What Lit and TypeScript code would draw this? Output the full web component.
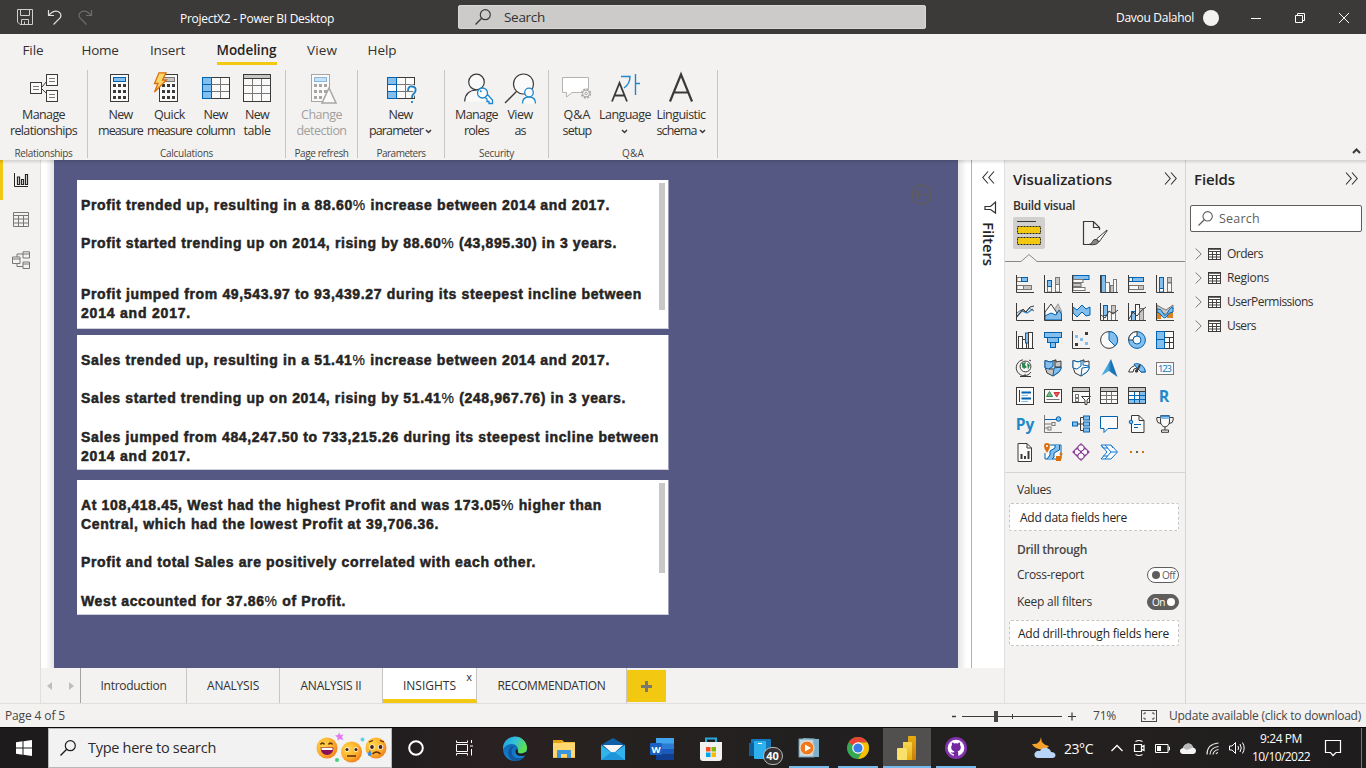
import { LitElement, html, css, svg, nothing } from "lit";
import { customElement, property } from "lit/decorators.js";

/** A single line of text whose tracking is adjusted so it spans `w` pixels. */
@customElement("fit-text")
class FitText extends LitElement {
  @property({ type: Number }) w = 0;
  @property() text = "";
  static styles = css`
    :host { display: inline-block; white-space: pre; }
    .thin { font-weight: 400; -webkit-text-stroke: 0.25px currentColor; }
  `;
  render() {
    const parts = this.text.split("%");
    const thin = this.hasAttribute("thin-percent");
    return html`<span>${thin ? parts.map((p, i) => html`${p}${i < parts.length - 1 ? html`<span class="thin">%</span>` : nothing}`) : this.text}</span>`;
  }
  updated() {
    const s = this.renderRoot.querySelector("span") as HTMLElement;
    s.style.letterSpacing = "0px";
    const natural = s.getBoundingClientRect().width;
    s.style.letterSpacing = (this.w - natural) / Math.max(1, this.text.length) + "px";
  }
}

const t = (text: string, w: number) => html`<fit-text .text=${text} .w=${w}></fit-text>`;

const D = "#3b3a39", G = "#c8c6c4", GS = "#797775", B = "#83beec", BS = "#0063b1", W = "#fafafa";

const rc = (x: number, y: number, w: number, h: number, f = "none", s = "none") =>
  svg`<rect x=${x} y=${y} width=${w} height=${h} fill=${f} stroke=${s}/>`;
const ph = (d: string, s = D, f = "none", sw = 1) =>
  svg`<path d=${d} stroke=${s} fill=${f} stroke-width=${sw}/>`;
const ci = (x: number, y: number, r: number, f = "none", s = "none", sw = 1) =>
  svg`<circle cx=${x} cy=${y} r=${r} fill=${f} stroke=${s} stroke-width=${sw}/>`;
const ic = (w: number, h: number, body: unknown) =>
  html`<svg width=${w} height=${h} viewBox="0 0 ${w} ${h}" fill="none">${body}</svg>`;

const axis = ph("M.5 0V17.5H18");
const map = "M1 1.5L6 3L12 .8L12 3L17 2V9L15 13L9 17L3 14L1 8Z";

const visuals = [
  [rc(1, 2.5, 5, 4, W, GS), rc(5.5, 2.5, 6, 4, B, BS), rc(1, 10.5, 7, 4, W, GS), rc(7.5, 10.5, 8, 4, G, GS), axis],
  [rc(3.5, 11, 4, 6, W, GS), rc(3.5, 5.5, 4, 6, B, BS), rc(11.5, 9, 4, 8, W, GS), rc(11.5, 2.5, 4, 7, G, GS), axis],
  [rc(1, .5, 16, 4, B, BS), rc(1, 4.5, 10, 3, W, GS), rc(1, 8.5, 8, 3, G, GS), rc(1, 12.5, 12, 3, W, GS), axis],
  [rc(1.5, .5, 4, 17, B, BS), rc(5.5, 7.5, 4, 10, W, GS), rc(10.5, 10.5, 3, 7, G, GS), rc(13.5, 4.5, 3, 13, W, GS), axis],
  [rc(1, 2.5, 4, 4, W, BS), rc(4.5, 2.5, 11, 4, B, BS), rc(1, 10.5, 10, 4, W, GS), rc(10.5, 10.5, 5, 4, G, GS), axis],
  [rc(3.5, 12, 4, 5, W, BS), rc(3.5, 2.5, 4, 11, B, BS), rc(11.5, 8, 4, 9, W, GS), rc(11.5, 2.5, 4, 5, G, GS), axis],

  [ph("M1 13L6 8L11 10L17 6", "#2488d8", "none", 1.3), ph("M1 10L5 7L10 9L13 5L18 8", "#605e5c"), ph("M1 14L7 6L10 9L14 4L18 3"), axis],
  [ph("M9 9L14 .8L17.5 8V17H9Z", "#a19f9d", G), ph("M1 17V9L7 1L13 10V17Z", D, W), ph("M1 13L7 10L12 12L15 7L17.5 11V17H1Z", BS, B), axis],
  [ph("M1 4L5 7L10 2L14 6L18 4V12L14 13L10 9L5 14L1 10Z", BS, B), axis],
  [rc(3.5, 2.5, 4, 15, B, BS), rc(11.5, 2.5, 4, 15, G, GS), rc(3.5, 12.5, 4, 5, W, BS), rc(11.5, 9.5, 4, 8, W, GS), ph("M1 12L5 15L9 8L13 11L18 7"), axis],
  [rc(3.5, 8.5, 4, 9, B, BS), rc(7.5, 1.5, 4, 16, W, D), rc(11.5, 5.5, 4, 12, G, GS), ph("M1 16L5 9L9 13L13 8L18 4"), axis],
  [ph("M1 2L6 5L10 7L17 2V6L12 12L6 10L1 8Z", GS, G), rc(1, 8, 4, 8, "#d98324"), rc(11, 9, 6, 6, "#d98324"), ph("M1 6Q5 5 7 10T12 9T17 5V9Q13 9 11 13T5 12T1 10Z", BS, B), axis],

  [rc(2.5, 5.5, 4, 12, W, D), rc(6.5, 8.5, 4, 9, W, D), rc(9.5, 2, 3, 10, B, BS), rc(12.5, 1.5, 4, 16, W, D), axis],
  [rc(.5, 1.5, 17, 5, B, BS), rc(3.5, 6.5, 11, 5, B, BS), rc(6.5, 11.5, 5, 5, B, BS)],
  [rc(13, 1, 3, 3, D), rc(3, 4, 3, 3, B), rc(8, 7, 3, 3, B), rc(13, 11, 3, 3, B), rc(3, 12, 3, 3, D), axis],
  [ci(9, 9, 8.4, W, D), ph("M9 9V.6A8.4 8.4 0 0 1 15 15Z", BS, B)],
  [ci(9, 9, 8.4, B, BS), ph("M9 .6A8.4 8.4 0 0 0 .6 9H5A4 4 0 0 1 9 5Z", D, W), ci(9, 9, 4, W, BS)],
  [rc(.5, .5, 17, 17, W, D), rc(.5, .5, 8, 8, B, BS), rc(.5, 8.5, 8, 9, B, BS), ph("M8.5 6.5H17.5M13.5 6.5V17.5M8.5 11.5H17.5")],

  [ci(9.5, 7.5, 5.4, W, D), ph("M6 4L10 3L9 6L11 8L8 10L6 8ZM11 4L14 6L12 11Z", "none", "#2d8a4e"), ph("M7 .8A8 8 0 1 0 15 13M9 15V17.5M4 17.5H15M13 1L15 2", D)],
  [ph(map, D, G), ph("M1 1.5L6 3L9 2V7L5 10L1 9ZM10 9L17 8V10L15 13L9 17Z", BS, B), ph("M11 1V8H17M5 10L9 10", D)],
  [ph(map, D, W), ph("M1 1.5L6 3L9 2V7L5 10L1 9ZM10 9L17 8V10L15 13L9 17Z", BS, W), ph("M11 1V6L17 7", BS)],
  [svg`<defs><linearGradient id="az" x1="0" x2="1"><stop offset=".4" stop-color="#4aa9dc"/><stop offset=".6" stop-color="#1b74b8"/></linearGradient></defs><path d="M11 0L17.500 18L9 12L1.500 16.500Z" fill="url(#az)"/>`],
  [ph("M.7 13A8.500 8.500 0 0 1 17.300 13H13A4 4 0 0 0 5 13Z", D, W), ph("M6 5.200A8.500 8.500 0 0 1 17.300 13H13L9 9Z", BS, B), ph("M8 13L12 6", D, "none", 2), ci(8.5, 12, 1.6, D)],
  [rc(.5, 3.5, 17, 12, W, GS), svg`<text x="9" y="13" text-anchor="middle" font-size="9.500" font-family="Noto Sans, sans-serif" fill="#0f7ac6" textLength="14">123</text>`],

  [rc(.5, .5, 17, 17, W, D), ph("M3.500 3V15", D), ph("M5.500 5.500H15M5.500 11.500H15", BS, "none", 2), ph("M5.500 8.500H12M5.500 14.500H12", B)],
  [rc(.5, 2.5, 17, 13, W, D), ph("M2.500 9.500L5.500 4.500L8.500 9.500Z", "#2d8a4e", "#7bbf8e"), ph("M10 5.500H15.500L12.700 10Z", "#d13438", "#e05a5e"), ph("M2.500 12.500H15.500", GS)],
  [rc(.5, .5, 17, 15, W, D), rc(1, 1, 16, 3, G), ph("M.5 4.500H17.500", D), rc(3.5, 7.5, 3, 3, "none", GS), rc(3.5, 11.5, 3, 3, "none", GS), ph("M9.500 9.500H18.500L15 13V17.500H13V13Z", D, "#fff")],
  [rc(.5, .5, 17, 16, W, D), rc(1, 1, 16, 3, G), ph("M.5 4.500H17.500", D), ph("M6.500 5V16.500M11.500 5V16.500M1 8.500H17M1 12.500H17", GS)],
  [rc(.5, .5, 17, 16, W, D), rc(1, 1, 16, 3, G), rc(1, 12.5, 16, 4, B), rc(11.5, 5, 6, 12, B), ph("M.5 4.500H17.500", D), ph("M6.500 5V16.500M11.500 5V16.500M1 8.500H17M1 12.500H17", BS), rc(.5, .5, 17, 16, "none", D)],
  [svg`<text x="8" y="15" text-anchor="middle" font-size="16" font-weight="700" font-family="Open Sans, sans-serif" fill="#1f8ac9">R</text>`],

  [svg`<text x="9" y="14.500" text-anchor="middle" font-size="15.500" font-weight="700" font-family="Open Sans, sans-serif" fill="#1f8ac9">Py</text>`],
  [ph("M.5 0V17.500H18", GS), ph("M1 4.500H13", BS), ph("M1 9H8M1 13H5", GS), ci(14.5, 4, 2.3, B, BS), rc(8, 7.5, 3, 3, W, GS), rc(4, 12, 3, 3, W, GS)],
  [ph("M6 9H11M8.500 9V2.500H11M8.500 9V15.500H11", D), rc(.5, 7, 5, 4, B, BS), rc(11.5, 1, 6, 4, B, BS), rc(11.5, 7, 6, 4, B, BS), rc(11.5, 13, 6, 4, B, BS)],
  [ph("M.5 1.500H17.500V13.500H8L4 17.500V13.500H.5Z", BS, W)],
  [ph("M3.500 .5H11L16 5.500V17.500H3.500Z", D, W), ph("M11 .5V5.500H16"), ci(3, 7, 1.8, B, BS), ph("M6 9.500H13M6 12.500H10", BS)],
  [ph("M4.500 .8H13.500V6Q13.500 11 9 12Q4.500 11 4.500 6Z", D, W), rc(4.5, 1, 9, 3, B), ph("M4.500 1H13.500", BS), ph("M4.500 2.500H.8V5Q1 8.500 5 8.500M13.500 2.500H17.200V5Q17 8.500 13 8.500M9 12V15M5.500 17.300V15H12.500V17.300Z")],

  [ph("M2 .5H11L15.500 5V18.500H2Z", D, W), ph("M11 .5V5H15.500"), ph("M5.500 16V11M9 16V13M12.500 16V8", D, "none", 2)],
  [ph("M6 2H17V16H1V10", BS, W), ph("M13 2V6L8 9V13L5 16", "#83beec", "none", 4), ph("M11 2V5L6 8V12L3 16M15.500 2V7L10 10V14L8 16", BS), ph("M3 0A3 3 0 0 1 6 3Q6 6 3 10Q0 6 0 3A3 3 0 0 1 3 0Z", "none", "#d9700b"), ci(3, 3, 1, "#fff"), rc(12, 13, 5, 5, "#d9700b"), ci(17, 11, 1.5, "#d9700b")],
  [ph("M9 .8L17 9L9 17.200L1 9Z", "#8a3a96", W, 1.2), ci(5.5, 9, 3.2, W, "#8a3a96"), ci(12.5, 9, 3.2, W, "#8a3a96"), ci(9, 5, 3.2, W, "#8a3a96"), ci(9, 13, 3.2, W, "#8a3a96"), ph("M5 5L13 13M13 5L5 13", "#8a3a96")],
  [ph("M1 2H11L17.500 9L11 16H1L7 9Z", "#1279d2", W), ph("M5 2L11 9L5 16M1 2L3 5H8M3 13H8M11 2L13 5M11 9H17", "#1279d2")],
  [rc(2, 8, 2, 2, "#d9700b"), rc(8, 8, 2, 2, "#605e5c"), rc(14, 8, 2, 2, "#d9700b")],
];

/* Ribbon glyphs, 32 x 32 */
const calc = (x: number, dk = D, fill = B, st = BS) => [
  rc(x + .5, 2.5, 18, 27, W, dk), rc(x + 3.5, 5.5, 12, 4, fill, st),
  [12, 18, 24].map(y => [3, 8, 13].map(dx => rc(x + dx, y, 3, 3, dk))),
];
const node = (x: number, y: number) => [rc(x + .5, y + .5, 11, 11, W, D), ph(`M${x + 3} ${y + 4.5}H${x + 9}M${x + 3} ${y + 7.5}H${x + 9}`, GS)];
const table = (blueCol: boolean) => [
  rc(2.5, 5.5, 27, 21, W, D), rc(2.5, 5.5, 9, 21, B, BS), ph("M11.500 12.500H29M11.500 19.500H29M20.500 6V26", GS), ph("M3 12.500H11M3 19.500H11", BS),
  blueCol ? nothing : [rc(3, 13, 8, 6, W), rc(2.5, 5.5, 9, 21, "none", BS)],
];
const R: Record<string, unknown> = {
  rel: [ph("M14 15L19 9M14 17L19 22"), node(2, 10), node(18, 2), node(18, 18)],
  calc: calc(5),
  quick: [calc(5, D, G, GS), ph("M5 .8H12L8.500 8H12.500L.5 20L4 11.500H.5Z", "#d8710d", "#fcd56a", 1.3)],
  column: table(true),
  table: [rc(2.5, 2.5, 27, 27, W, D), rc(3, 3, 26, 3.5, G), ph("M2.500 6.500H29.500", D), ph("M3 13.500H29M3 21.500H29M11.500 7V29M20.500 7V29", GS)],
  change: [calc(5, "#a8a6a4", "#c7e0f4", "#8ab8dc"), ph("M23 16L30 31H16Z", "#a8a6a4", W, 1.5)],
  param: [table(false), ph("M23 19Q23 14 27 14.500Q31.500 15 30.500 19Q30 21 28 22.500Q27 23.500 27 26M27 29V31", "#f3f2f1", "none", 4), ph("M23 19Q23 14 27 14.500Q31.500 15 30.500 19Q30 21 28 22.500Q27 23.500 27 26M27 29V31", "#1f7fc0", "none", 1.8)],
  roles: [ph("M4 29.500Q4 18 15.500 18Q20 18 22 20L24 29.500Z", "none", W), ci(15.500, 10, 7.8, W, D, 1.2), ph("M3.700 29.500Q4 18.500 15.500 18", D, "none", 1.2), ph("M26 22L31.500 28V31.500H28V29.500H26V27L23.500 25Z", "#1e88cf", W, 1.3), ci(21.5, 21, 5, W, "#1e88cf", 1.3), ci(19.8, 19.3, 1, "#1e88cf")],
  view: [ci(19.5, 12, 10, W, D, 1.2), ph("M12.500 19.500L1 31", D, "none", 1.3), ph("M18.500 31.500Q18.500 24.500 25 24.500T31.500 31.500", "#f3f2f1", W, 4), ph("M18.500 31.500Q18.500 25 25 25T31.500 31.500", "#1e88cf", W, 1.3), ci(25, 20.5, 4.3, W, "#1e88cf", 1.3)],
  qa: [ph("M1.500 5.500H27.500V20.500H11L5.500 25V20.500H1.500Z", "#b5b3b1", "#fff"), ci(25, 21.500, 5.500, "#f3f2f1"), svg`<circle cx="25" cy="21.500" r="4.200" fill="#fafafa" stroke="#a8a6a4" stroke-width="2" stroke-dasharray="2 1.300"/>`, ci(25, 21.5, 3.4, "#fafafa", "#a8a6a4"), ci(25, 21.5, 1.3, "none", "#a8a6a4")],
  lang: [ph("M3 29.500L10.500 11L18 29.500M5.500 23.500H15.500", D, "none", 1.8), ph("M12 4.500H21Q21 12 15 16M26.500 2V23M26.500 11.500H31", "#1e88cf", "none", 1.4)],
  ling: [ph("M5 29.500L16 2.500L27 29.500M9 20.500H23", D, "none", 2.2)],
};

type Btn = [string, number, string, number, string, number, boolean?];
const groups: { label: string; lw: number; w: number; pad: number; dim?: boolean; buttons: Btn[] }[] = [
  { label: "Relationships", lw: 58, w: 88, pad: 0, buttons: [["rel", 87, "Manage", 43, "relationships", 67]] },
  { label: "Calculations", lw: 53, w: 198, pad: 8, buttons: [["calc", 49, "New", 24, "measure", 45], ["quick", 49, "Quick", 31, "measure", 45], ["column", 43, "New", 24, "column", 39], ["table", 40, "New", 24, "table", 27]] },
  { label: "Page refresh", lw: 54, w: 72, pad: 0, dim: true, buttons: [["change", 71, "Change", 41, "detection", 50]] },
  { label: "Parameters", lw: 49, w: 87, pad: 0, buttons: [["param", 85, "New", 24, "parameter", 54, true]] },
  { label: "Security", lw: 35, w: 104, pad: 9, buttons: [["roles", 45, "Manage", 43, "roles", 25], ["view", 42, "View", 25, "as", 11]] },
  { label: "Q&A", lw: 22, w: 169, pad: 8, buttons: [["qa", 40, "Q&A", 27, "setup", 29], ["lang", 56, "Language", 52, "", 0, true], ["ling", 56, "Linguistic", 49, "schema", 40, true]] },
];

const caret = html`<span class="caret">${ic(7, 5, ph("M1 1L3.500 3.500L6 1", D, "none", 1.5))}</span>`;
const lens = (s: number, c: string) => html`<svg width=${s} height=${s} viewBox="0 0 16 16" fill="none"><circle cx="10.300" cy="5.700" r="5" stroke=${c} stroke-width="1.200"/><path d="M6.700 9.300L.5 15.500" stroke=${c} stroke-width="1.300"/></svg>`;
const dbl = (flip: boolean) => ic(13, 13, ph(flip ? "M6 .5L.8 6.500L6 12.500M12 .5L6.800 6.500L12 12.500" : "M1 .5L6.200 6.500L1 12.500M7 .5L12.200 6.500L7 12.500", "#323130", "none", 1.1));

const insights: { cls: string; thumb: string; lines: [string, number][] }[] = [
  { cls: "card c1", thumb: "thumb t1", lines: [
    ["Profit trended up, resulting in a 88.60% increase between 2014 and 2017.", 529], ["", 0],
    ["Profit started trending up on 2014, rising by 88.60% (43,895.30) in 3 years.", 536], ["", 1],
    ["Profit jumped from 49,543.97 to 93,439.27 during its steepest incline between", 561], ["2014 and 2017.", 110]] },
  { cls: "card c2", thumb: "", lines: [
    ["Sales trended up, resulting in a 51.41% increase between 2014 and 2017.", 529], ["", 0],
    ["Sales started trending up on 2014, rising by 51.41% (248,967.76) in 3 years.", 545], ["", 0],
    ["Sales jumped from 484,247.50 to 733,215.26 during its steepest incline between", 578], ["2014 and 2017.", 110]] },
  { cls: "card c3", thumb: "thumb t3", lines: [
    ["At 108,418.45, West had the highest Profit and was 173.05% higher than", 521],
    ["Central, which had the lowest Profit at 39,706.36.", 358], ["", 0],
    ["Profit and total Sales are positively correlated with each other.", 455], ["", 0],
    ["West accounted for 37.86% of Profit.", 265]] },
];

/* Taskbar */
const face = (cx: number, cy: number, extra: unknown) => [svg`<circle cx=${cx} cy=${cy} r="10.500" fill="url(#fc)"/>`, extra];
const emojis = ic(71, 34, svg`
  <defs><radialGradient id="fc" cx=".35" cy=".35" r=".75"><stop offset="0" stop-color="#ffd84a"/><stop offset=".6" stop-color="#fcae2b"/><stop offset="1" stop-color="#ee7a1c"/></radialGradient></defs>
  ${face(10, 17, [ph("M3.500 13.500Q5.500 10.500 7.500 13.500M11.500 13.500Q13.500 10.500 15.500 13.500", "#5b2a12", "none", 1.5), ph("M3.500 16.500H16.500Q16 24 10 24T3.500 16.500Z", "none", "#8b0f5a"), ph("M4.500 17H15.500V19H4.500Z", "none", "#fff")])}
  ${face(34.500, 21, [ci(30, 18.500, 2.300, "#fff"), ci(39, 18.500, 2.300, "#fff"), ci(30, 18.500, 1.600, "#43200f"), ci(39, 18.500, 1.600, "#43200f"), ph("M30 25H39", "#5b2a12", "none", 1.500)])}
  ${face(59, 17, [ci(55, 16, 2.600, "#fff"), ci(63.500, 16, 2.600, "#fff"), ci(55, 16, 1.900, "#43200f"), ci(63.500, 16, 1.900, "#43200f"), ph("M55.500 23Q59.500 19 63.500 23M52 11L56 9.500M63 9.500L67 11", "#5b2a12", "none", 1.300), ph("M53 19Q49.500 23.500 52 25Q56 25 53 19Z", "none", "#2f8df0")])}
  <path d="M22 1.500L23.500 4L26.500 3.500L25 6L26.500 9L23 8L20.500 9.500L20.500 6.500L18 4.500L21 4Z" fill="#e07cf0"/><circle cx="45.500" cy="8.500" r="2" fill="#5fd3e6"/><circle cx="20" cy="29" r="2" fill="#45d17a"/>`);

const apps: { cls: string; icon: unknown }[] = [
  { cls: "app", icon: ic(26, 26, svg`<defs><linearGradient id="e1" x1="0" y1="0" x2="1" y2=".4"><stop offset="0" stop-color="#1b9de2"/><stop offset=".55" stop-color="#35c1d6"/><stop offset="1" stop-color="#5fe04a"/></linearGradient><linearGradient id="e2" x1="0" x2="0" y1="0" y2="1"><stop offset="0" stop-color="#0c59a4"/><stop offset="1" stop-color="#1688d9"/></linearGradient></defs>
      <circle cx="13" cy="13" r="12" fill="url(#e2)"/><path d="M1 13A12 12 0 0 1 25 12Q25 17 20 17.500Q15 17.500 16 15Q17 11 12.500 8.500Q6 6.500 1 13Z" fill="url(#e1)"/><path d="M12 10Q8 14 10.500 19T22 21.500Q17 26 10.500 24.500Q5 21 6.500 15Q8 10.500 12 10Z" fill="#124a8e" opacity=".75"/><path d="M16 15Q15 17.800 20 17.600L25 15.500Q24.500 20 20 20Q13 20 13.500 14.500Q15 12 16 15Z" fill="#201c1d"/>`) },
  { cls: "app", icon: ic(24, 22, [ph("M1 2H10L12 4H23V20H1Z", "none", "#f5b93a"), rc(1, 5, 22, 14, "#ffd76e"), rc(1, 2, 9, 3, "#e8a010"), ph("M5 20V13Q5 12 6 12H18Q19 12 19 13V20H15V16H9V20Z", "none", "#3a96dd")]) },
  { cls: "app", icon: ic(26, 24, svg`<path d="M1 8L13 1L25 8V23H1Z" fill="#0f5fa8"/><path d="M3 8H23L13 17Z" fill="#f2f2f2"/><path d="M1 8L13 17L25 8V23H1Z" fill="#31b3ec"/><path d="M1 23L13 14L25 23Z" fill="#1c95da"/><path d="M4 8H22L13 15.500Z" fill="#f7f7f7"/>`) },
  { cls: "app", icon: ic(26, 24, svg`<path d="M7 1H25V7H7Z" fill="#41a5ee"/><path d="M7 6.500H25V12H7Z" fill="#2b7cd3"/><path d="M7 12H25V17.500H7Z" fill="#185abd"/><path d="M7 17.500H25V23H7Z" fill="#103f91"/><rect x="1" y="6" width="12" height="12" rx="1" fill="#1a5fc4"/><text x="7" y="15.500" font-size="9.500" font-weight="700" font-family="Open Sans, sans-serif" text-anchor="middle" fill="#fff">W</text>`) },
  { cls: "app", icon: ic(26, 26, svg`<path d="M8 7V2.500H18V7" stroke="#29a9e0" stroke-width="2"/><path d="M2 6H24V22Q24 25 21 25H5Q2 25 2 22Z" fill="#f1f1f1"/><rect x="8" y="11" width="4.500" height="4.500" fill="#f25022"/><rect x="13.500" y="11" width="4.500" height="4.500" fill="#7fba00"/><rect x="8" y="16.500" width="4.500" height="4.500" fill="#00a4ef"/><rect x="13.500" y="16.500" width="4.500" height="4.500" fill="#ffb900"/>`) },
  { cls: "app", icon: html`<span class="badged">${ic(24, 22, svg`<rect x="3" y="1" width="20" height="17" rx="1" fill="#1478b8"/><rect x="1" y="5" width="5" height="13" fill="#0f5f9a"/><rect x="6" y="3" width="12" height="18" rx="1" fill="#2fb0ef"/><path d="M10 5.500H14" stroke="#fff"/>`)}<span class="badge">40</span></span>` },
  { cls: "app run", icon: ic(24, 22, svg`<path d="M6 1L20 2V20L6 19Z" fill="#9dc7dd"/><rect x="2" y="2" width="15" height="18" fill="#b9d7e6" stroke="#6c97b0"/><rect x="18" y="2" width="4" height="18" fill="#7fb0cb"/><circle cx="10" cy="11" r="7" fill="#f0781e" stroke="#f7e4d3"/><path d="M8 7.500L14 11L8 14.500Z" fill="#fff"/>`) },
  { cls: "app run", icon: ic(24, 24, svg`<circle cx="12" cy="12" r="11" fill="#34a853"/><path d="M12 12L2.500 6.500A11 11 0 0 1 21.500 6.500H12Z" fill="#ea4335"/><path d="M12 6.500H21.500A11 11 0 0 1 12 23L17 14.500Z" fill="#fbbc05"/><circle cx="12" cy="12" r="5.800" fill="#fff"/><circle cx="12" cy="12" r="4.600" fill="#3a7de8"/>`) },
  { cls: "app on", icon: ic(24, 26, svg`<defs><linearGradient id="p1" x1="0" x2="0" y1="0" y2="1"><stop offset="0" stop-color="#e6ad10"/><stop offset="1" stop-color="#c87e0e"/></linearGradient><linearGradient id="p2" x1="0" x2="0" y1="0" y2="1"><stop offset="0" stop-color="#f6d751"/><stop offset="1" stop-color="#e6ad10"/></linearGradient></defs><rect x="13" y="1" width="8" height="24" rx="1" fill="url(#p1)"/><path d="M8 7H16Q17 7 17 8V25H8Z" fill="url(#p2)"/><path d="M3 13H10Q12 13 12 15V25H3Q2 25 2 24V14Q2 13 3 13Z" fill="#f9e068"/>`) },
  { cls: "app run", icon: ic(24, 24, svg`<circle cx="12" cy="12" r="11" fill="#8231ad"/><circle cx="12" cy="12" r="8.300" fill="#fff"/><path d="M9.800 20.500V18Q7.500 18.300 6.500 16Q8.500 17 9.900 16.300L10.400 15.300Q7.200 14.600 7.200 11.300Q7.200 9.800 8 9Q7.700 7.500 8.200 6.600Q9.300 6.700 10.200 7.500Q12 7 13.800 7.500Q14.700 6.700 15.800 6.600Q16.300 7.500 16 9Q16.800 9.800 16.800 11.300Q16.800 14.600 13.600 15.300Q14.300 16 14.200 17V20.500Z" fill="#74279e"/>`) },
];

@customElement("app-root")
class AppRoot extends LitElement {
  static styles = css`
    :host { display: flex; flex-direction: column; width: 1366px; height: 768px; overflow: hidden; background: #f3f2f1; color: #323130; font-family: "Open Sans", "Noto Sans", sans-serif; font-size: 12px; line-height: 16px; }
    * { box-sizing: border-box; }
    svg { display: block; flex: none; overflow: visible; }
    .title { height: 34px; flex: none; background: #3b3a39; color: #fff; display: grid; grid-template-columns: 180px 278px 468px 1fr; align-items: center; }
    .quick { display: flex; gap: 14px; padding-left: 17px; }
    .tname { padding-top: 4px; font-size: 12px; }
    .tsearch { height: 24px; background: #cdcbc9; border: 1px solid #d9d7d5; border-radius: 2px; color: #323130; display: flex; align-items: center; gap: 13px; padding-left: 16px; font-size: 13.500px; }
    .win { display: flex; align-items: center; padding: 1px 0 0 190px; gap: 34px; }
    .user { display: flex; align-items: center; gap: 9px; margin-right: -2px; }
    .avatar { width: 16px; height: 16px; border-radius: 50%; background: #f3f2f1; }
    .menus { height: 32px; flex: none; display: flex; }
    .menu { height: 31px; display: flex; flex-direction: column; justify-content: space-between; align-items: center; font-size: 13.500px; padding-top: 8px; flex: none; }
    .menu.sel { font-weight: 600; color: #252423; }
    .bar { height: 3px; width: 60px; background: #f2c811; }
    .ribbon { height: 94px; flex: none; display: flex; padding-top: 4px; }
    .group { height: 88px; border-right: 1px solid #c8c6c4; display: flex; flex-direction: column; flex: none; }
    .btns { display: flex; flex: none; height: 76px; padding-top: 2px; }
    .btn { display: flex; flex-direction: column; align-items: center; font-size: 12.500px; flex: none; }
    .btn.odd > svg { margin-left: 1px; }
    .l1 { margin-top: 3px; height: 16px; }
    .l2 { height: 16px; display: flex; align-items: center; gap: 3px; }
    .caret { margin-left: -1px; padding-top: 1px; }
    .glabel { flex: none; height: 12px; font-size: 10px; line-height: 14px; text-align: center; color: #484644; }
    .dim { color: #a19f9d; }
    .collapse { align-self: flex-end; margin: 0 5px 6px auto; }
    .main { height: 544px; flex: none; display: flex; position: relative; border-bottom: 1px solid #e1dfdd; }
    .shade { position: absolute; left: 0; right: 0; top: 0; height: 4px; background: linear-gradient(rgba(0,0,0,.14), rgba(0,0,0,0)); }
    .rail { width: 41px; border-right: 1px solid #e1dfdd; flex: none; display: flex; flex-direction: column; }
    .view { height: 40px; display: flex; align-items: center; padding-left: 12px; }
    .view.cur { border-left: 3px solid #f2c811; padding-left: 10px; }
    .center { width: 963px; flex: none; display: flex; flex-direction: column; }
    .work { height: 508px; display: flex; background: #fff; }
    .gl { width: 13px; background: linear-gradient(90deg, #fff 35%, #e6e5e6); }
    .page { width: 904px; background: #545882; padding: 20px 0 0 23px; display: flex; align-items: flex-start; }
    .gr { width: 13px; background: linear-gradient(270deg, #fff 35%, #e6e5e6); }
    .back { margin: 4px 0 0 242px; }
    .card { position: relative; width: 592px; background: #fff; border-bottom: 1px solid #d0d0dc; border-right: 1px solid #9c9eb8; padding: 15.700px 0 0 4px; overflow: hidden; color: #252423; font: 700 14px/19.250px "Liberation Sans", Arial, sans-serif; -webkit-text-stroke: .5px #252423; }
    .c1 { height: 149px; } .c2 { height: 135px; margin-top: 6px; } .c3 { height: 135px; margin-top: 10px; }
    .ln { height: 19.250px; display: flex; }
    .ln.tall { height: 31.800px; }
    .thumb { position: absolute; right: 3px; top: 3px; width: 6px; background: #c8c8c8; }
    .t1 { height: 127px; } .t3 { height: 90px; }
    .filters { width: 33px; border-left: 1px solid #b3b0ad; background: #fff; display: flex; flex-direction: column; align-items: center; padding-top: 11px; }
    .funnel { margin: 17px 0 8px 3px; }
    .vert { writing-mode: vertical-rl; font-size: 15px; font-weight: 600; letter-spacing: -.1px; color: #252423; margin-left: 1px; }
    .tabs { height: 35px; display: flex; align-items: stretch; font-size: 12px; }
    .arrows { width: 40px; border-right: 1px solid #a6a4a2; display: flex; align-items: center; justify-content: space-between; padding: 0 6px; }
    .tab { border-right: 1px solid #c8c6c4; display: flex; align-items: center; justify-content: center; position: relative; }
    .tab.sel { background: #fff; border-bottom: 4px solid #f2c811; padding-top: 4px; }
    .x { position: absolute; right: 4px; top: 1px; font-size: 11px; }
    .add { width: 39px; height: 32px; margin-top: 2px; background: #f2c811; display: flex; align-items: center; justify-content: center; }
    .viz { width: 182px; border-left: 1px solid #e1dfdd; border-right: 1px solid #d6d4d2; flex: none; }
    .head { display: flex; justify-content: space-between; align-items: center; height: 39px; padding: 0 8px 2px; font-size: 15px; font-weight: 600; color: #252423; }
    .sub { padding: 0 8px; font-weight: 600; height: 14px; line-height: 14px; }
    .modes { display: flex; padding: 4px 8px 0; gap: 38px; height: 37px; }
    .mode { width: 32px; height: 32px; background: #d2d0ce; border-radius: 2px; display: flex; align-items: center; justify-content: center; }
    .notch { margin-top: 4px; }
    .grid { display: grid; grid-template-columns: repeat(6, 28px); grid-auto-rows: 28px; padding: 8px 0 0 6px; }
    .cell { display: flex; align-items: center; justify-content: center; }
    .wells { margin-top: 6px; border-top: 1px solid #d6d4d2; padding: 9px 6px 0 4px; }
    .wl { padding-left: 8px; height: 16px; }
    .drop { border: 1px dashed #c8c6c4; background: #fff; border-radius: 2px; height: 28px; margin-top: 5px; padding: 1px 0 0 10px; display: flex; align-items: center; color: #252423; }
    .drop.low { height: 26px; margin-top: 10px; padding-left: 8px; }
    .drill { margin-top: 11px; font-weight: 600; color: #484644; }
    .sw { display: flex; justify-content: space-between; align-items: center; padding-left: 8px; height: 16px; margin-top: 9px; }
    .sw.b { margin-top: 11px; }
    .tog { width: 32px; height: 16px; border: 1px solid #605e5c; border-radius: 8px; display: flex; align-items: center; gap: 2px; padding: 0 4px; font-size: 10px; line-height: 14px; background: #fff; color: #605e5c; }
    .tog.on { background: #605e5c; color: #fff; }
    .dot { width: 8px; height: 8px; border-radius: 50%; background: #605e5c; flex: none; }
    .on .dot { background: #fff; }
    .fields { width: 180px; flex: none; }
    .fsearch { margin: 6px 4px 10px; height: 27px; width: 172px; border: 1px solid #605e5c; border-radius: 2px; background: #fff; display: flex; align-items: center; gap: 6px; padding-left: 7px; font-size: 12.500px; color: #605e5c; }
    .field { height: 24px; display: flex; align-items: center; padding-left: 9px; gap: 6px; }
    .status { height: 24px; flex: none; display: flex; align-items: center; padding-left: 5px; color: #484644; font-size: 12px; border-bottom: 1px solid #0c0a0b; }
    .zoom { display: flex; align-items: center; margin-left: 887px; gap: 6px; }
    .pct { margin-left: 17px; } .fit { margin: 0 12px 0 25px; }
    .task { height: 40px; flex: none; background: linear-gradient(90deg, #1e1b1c, #221e1f 30%, #2a2122 36%, #262220 45%, #211f1f 60%, #242020 80%, #1e1c1d); display: flex; color: #fff; }
    .start { width: 48px; display: flex; align-items: center; justify-content: center; }
    .find { width: 344px; background: #f2f2f2; border: 1px solid #b8b8b8; display: flex; align-items: center; padding-left: 11px; color: #2b2b2b; font-size: 14.500px; }
    .find fit-text { margin-left: 12px; }
    .find .emo { margin: -1px 3px 0 auto; }
    .sys { width: 48px; display: flex; align-items: center; justify-content: center; }
    .gap { width: 2px; }
    .app { width: 49px; display: flex; align-items: center; justify-content: center; position: relative; padding-top: 1px; }
    .app.on { background: #51504f; border-bottom: 2px solid #76b9ed; width: 48px; padding-top: 2px; margin-left: 1px; }
    .run { border-bottom: 2px solid #76b9ed; width: 40px; margin: 0 4.500px; padding-top: 2px; }
    .badged { position: relative; }
    .badge { position: absolute; left: 15px; top: 9px; width: 20px; height: 18px; border-radius: 9px; background: #333; border: 1px solid #b8b8b8; font: 700 11px/16px "Open Sans", sans-serif; text-align: center; }
    .tray { display: flex; align-items: center; flex: 1; padding-left: 52px; }
    .temp { font-size: 14px; margin-left: 8px; padding-top: 1px; }
    .icons { display: flex; align-items: center; margin-left: 18px; width: 134px; justify-content: space-between; }
    .clock { display: flex; flex-direction: column; align-items: center; line-height: 18px; width: 60px; margin-left: 6px; font-size: 12px; }
    .note { margin-left: 14px; }
    .edge { width: 1px; height: 40px; background: #777; margin-left: 20px; }
  `;

  private titleBar() {
    return html`<div class="title">
      <div class="quick">
        ${ic(16, 16, [ph("M.5 .5H15.500V15.500H3L.5 13Z", "#d0cecc"), ph("M3.500 .5V6.500H12.500V.5M4.500 15V10.500H11.500V15M7.500 12.500V15", "#d0cecc")])}
        ${ic(16, 16, ph("M1.500 1V6.500H7M1.800 6.300Q6.500 1 11 2.500Q15 4.500 13.500 8.500L6.500 15.500", "#e1dfdd", "none", 1.200))}
        ${ic(16, 16, ph("M14.500 1V6.500H9M14.200 6.300Q9.500 1 5 2.500Q1 4.500 2.500 8.500L9.500 15.500", "#6f6d6b", "none", 1.200))}
      </div>
      <div class="tname">${t("ProjectX2 - Power BI Desktop", 154)}</div>
      <div class="tsearch">${lens(16, D)}${t("Search", 41)}</div>
      <div class="win"><div class="user">${t("Davou Dalahol", 78)}<span class="avatar"></span></div>
        ${ic(10, 10, ph("M0 5.500H10", "#fff"))}
        ${ic(10, 10, ph("M.5 2.500H7.500V9.500H.5ZM2.500 2.500V.5H9.500V7.500H7.500", "#fff"))}
        ${ic(10, 10, ph("M0 0L10 10M10 0L0 10", "#fff"))}</div>
    </div>`;
  }

  private ribbon() {
    const menus: [string, number, number][] = [["File", 21, 66], ["Home", 37, 68], ["Insert", 35, 67], ["Modeling", 60, 91], ["View", 30, 60], ["Help", 29, 60]];
    return html`<div class="menus">
        ${menus.map(([n, w, box]) => html`<div class="menu ${n === "Modeling" ? "sel" : ""}" style="width:${box}px">${t(n, w)}${n === "Modeling" ? html`<span class="bar"></span>` : nothing}</div>`)}
      </div>
      <div class="ribbon">
        ${groups.map(g => html`<div class="group" style="width:${g.w}px">
          <div class="btns ${g.dim ? "dim" : ""}" style="padding-left:${g.pad}px">
            ${g.buttons.map(([k, w, a, aw, b, bw, drop]) => html`<div class="btn ${w % 2 ? "odd" : ""}" style="width:${w}px">
              ${ic(32, 32, R[k])}<div class="l1">${t(a, aw)}</div>
              <div class="l2">${b ? t(b, bw) : nothing}${drop ? caret : nothing}</div></div>`)}
          </div>
          <div class="glabel">${t(g.label, g.lw)}</div></div>`)}
        <div class="collapse">${ic(9, 6, ph("M1 5L4.500 1.500L8 5", D, "none", 2))}</div>
      </div>`;
  }

  private center() {
    const tabs: [string, number, number][] = [["Introduction", 66, 106], ["ANALYSIS", 52, 93], ["ANALYSIS II", 61, 103], ["INSIGHTS", 53, 94], ["RECOMMENDATION", 108, 150]];
    return html`<div class="center">
      <div class="work">
        <div class="gl"></div>
        <div class="page">
          <div>${insights.map(c => html`<div class=${c.cls}>
            ${c.lines.map(([s, w]) => html`<div class="ln ${!s && w ? "tall" : ""}">${s ? html`<fit-text thin-percent .text=${s} .w=${w}></fit-text>` : nothing}</div>`)}
            ${c.thumb ? html`<div class=${c.thumb}></div>` : nothing}</div>`)}</div>
          <div class="back">${ic(21, 21, [ci(10.5, 10.5, 9.5, "none", "#605e5c", 1.600), ph("M16 10.500H5.500M10 5.500L5 10.500L10 15.500", "#605e5c", "none", 1.600)])}</div>
        </div>
        <div class="gr"></div>
        <div class="filters">${dbl(true)}
          <span class="funnel">${ic(12, 13, ph("M11.500 1V12L6.500 8.500H1V5.500H6.500Z", "#323130", "none", 1.200))}</span>
          <span class="vert">Filters</span></div>
      </div>
      <div class="tabs">
        <div class="arrows">${ic(5, 8, ph("M5 0V8L0 4Z", "none", "#c0bebc"))}${ic(5, 8, ph("M0 0V8L5 4Z", "none", "#c0bebc"))}</div>
        ${tabs.map(([n, w, box]) => html`<div class="tab ${n === "INSIGHTS" ? "sel" : ""}" style="width:${box}px">${t(n, w)}${n === "INSIGHTS" ? html`<span class="x">x</span>` : nothing}</div>`)}
        <div class="add">${ic(11, 11, ph("M5.500 0V11M0 5.500H11", "#7a786f", "none", 3))}</div>
      </div>
    </div>`;
  }

  private panes() {
    const fields: [string, number][] = [["Orders", 36], ["Regions", 42], ["UserPermissions", 86], ["Users", 29]];
    return html`<div class="viz">
        <div class="head">${t("Visualizations", 99)}${dbl(false)}</div>
        <div class="sub">${t("Build visual", 62)}</div>
        <div class="modes">
          <div class="mode">${ic(26, 26, [ph("M1 1.500H20", D), svg`<rect x="1.500" y="6.500" width="23" height="7" fill="#f2c811" stroke="#252423" stroke-dasharray="2 1"/><rect x="1.500" y="17.500" width="23" height="7" fill="#f2c811" stroke="#252423" stroke-dasharray="2 1"/>`])}</div>
          ${ic(26, 32, [ph("M9 27.500H.5V4.500H10.500L16.500 10.500V13M10.500 4.500V10.500H16.500", D, "none", 1.200), ph("M24 13L13.500 22L16 25L24 14Z", D, "#fff"), ph("M13 22.500Q15.500 23 15.500 25Q14 28.500 6 27.500Q9 27 9.500 24.500Q10.500 22 13 22.500Z", D, "#8a8886")])}
        </div>
        <div class="notch">${ic(180, 8, ph("M0 7.500H16L24 .5L32 7.500H180", "#8a8886"))}</div>
        <div class="grid">${visuals.map(v => html`<div class="cell">${ic(18, 18, v)}</div>`)}</div>
        <div class="wells">
          <div class="wl">${t("Values", 34)}</div>
          <div class="drop">${t("Add data fields here", 107)}</div>
          <div class="wl drill">${t("Drill through", 70)}</div>
          <div class="sw">${t("Cross-report", 67)}<span class="tog"><span class="dot"></span>${t("Off", 13)}</span></div>
          <div class="sw b">${t("Keep all filters", 75)}<span class="tog on">${t("On", 13)}<span class="dot"></span></span></div>
          <div class="drop low">${t("Add drill-through fields here", 151)}</div>
        </div>
      </div>
      <div class="fields">
        <div class="head">${t("Fields", 41)}${dbl(false)}</div>
        <div class="fsearch">${lens(15, "#605e5c")}${t("Search", 41)}</div>
        ${fields.map(([n, w]) => html`<div class="field">${ic(7, 12, ph("M.7 .5L6.200 6L.7 11.500", "#797775"))}
          ${ic(13, 12, [rc(.5, .5, 12, 11, "#fff", D), ph("M.5 3.500H12.500M.5 6.500H12.500M.5 9H12.500M4.500 3V11M8.500 3V11", "#484644"), ph("M0 1H13", D, "none", 1.500)])}${t(n, w)}</div>`)}
      </div>`;
  }

  render() {
    const g = "#797775";
    return html`${this.titleBar()}${this.ribbon()}
      <div class="main">
        <div class="rail">
          <div class="view cur">${ic(16, 16, [ph("M1.500 1V14.500H15", "#252423"), ph("M4.500 12.500V5H6.500V12.500ZM8.500 12.500V7.500H10.500V12.500ZM12.500 12.500V2.500H14.500V12.500Z", "#252423", "none", 1.200)])}</div>
          <div class="view">${ic(17, 16, ph("M1.500 .5H16.500V14.500H1.500ZM1.500 3.500H16.500M1.500 7H16.500M1.500 11H16.500M6.500 3.500V14.500M11.500 3.500V14.500", g))}</div>
          <div class="view">${ic(18, 18, ph("M.5 6H8V12.500H.5ZM.5 8H8M11 .8H17.500V7H11ZM11 3H17.500M11 11H17.500V17.500H11ZM11 13H17.500M5 6V3H11M5 12.500V15.500H11", g))}</div>
        </div>
        ${this.center()}${this.panes()}
        <div class="shade"></div>
      </div>
      <div class="status">${t("Page 4 of 5", 60)}
        <div class="zoom">${ic(4, 12, ph("M0 6.500H4", D, "none", 1.500))}
          ${ic(100, 12, [ph("M0 6.500H100M50.500 4V9", D), rc(32, 1, 4, 11, "#484644")])}
          ${ic(8, 12, ph("M0 6.500H8M4 2.500V10.500", D, "none", 1.200))}</div>
        <span class="pct">${t("71%", 23)}</span>
        <span class="fit">${ic(16, 12, [rc(.5, .5, 15, 11, "none", "#484644"), ph("M3 4.500V3H5M11 3H13V4.500M3 7.500V9H5M11 9H13V7.500", "#484644")])}</span>
        ${t("Update available (click to download)", 192)}
      </div>
      <div class="task">
        <div class="start">${ic(16, 16, ph("M0 2.300L6.500 1.300V7.500H0ZM7.500 1.200L16 0V7.500H7.500ZM0 8.500H6.500V14.700L0 13.700ZM7.500 8.500H16V16L7.500 14.800Z", "none", "#fff"))}</div>
        <div class="find">${lens(16, "#1b1b1b")}${t("Type here to search", 128)}<span class="emo">${emojis}</span></div>
        <div class="sys">${ic(16, 16, ci(8, 8, 6.8, "none", "#fff", 2))}</div>
        <div class="sys">${ic(17, 16, ph("M.5 .5V2.500H11.500V.5M.5 15.500V13.500H11.500V15.500M.5 4.500H11.500V11.500H.5ZM15.500 0V3M15.500 9V15.500M14 6H17", "#fff"))}</div>
        <div class="gap"></div>
        ${apps.map(a => html`<div class=${a.cls}>${a.icon}</div>`)}
        <div class="tray">
          ${ic(24, 22, svg`<path d="M9 0Q9 8 17 9Q13 14 7 12Q2 11 0 7Q8 8 9 0Z" fill="#f5a12b"/><path d="M5 21Q2 20 2.500 16.500Q4 13 8 14Q10 9.500 15 11Q18.500 12 19 15Q23.500 15 23.500 18.500Q23 21 20 21Z" fill="#b8d4f6"/>`)}
          <span class="temp">${t("23°C", 29)}</span>
          <div class="icons">
            ${ic(12, 8, ph("M.5 7L6 1.500L11.500 7", "#fff", "none", 1.300))}
            ${ic(12, 16, ph("M1.500 4.500H8.500V11.500H1.500ZM8.500 7L11 5.500V10.500L8.500 9M2.500 1.500Q6 -.5 9.500 1.500M2.500 14.500Q6 16.500 9.500 14.500", "#fff", "none", 1.200))}
            ${ic(15, 9, [ph("M.5 .5H13V8.500H.5ZM13 3H14.500V6H13", "#fff"), rc(2, 2, 4, 5, "#fff")])}
            ${ic(16, 11, svg`<path d="M3 11Q0 10.500 0 8Q0 5.500 3 5Q4 1 8 .5Q12 .5 13 4.500Q16 5 16 8Q16 10.500 13.500 11Z" fill="#f4f4f4"/><path d="M3 5Q4 1 8 .5Q12 .5 13 4.500L7 7Z" fill="#b8b8b8"/>`)}
            ${ic(13, 13, ph("M1 12.500Q1 2 12.500 1M4 12.500Q4.500 5.500 12.500 4.500M7 12.500Q7.500 8.500 12.500 7.500M10 12Q10.500 11 12 10.500", "#e6e6e6", "none", 1.200))}
            ${ic(16, 14, ph("M.5 5H3L6.500 1.500V12.500L3 9H.5ZM9 5Q10 7 9 9M11 3Q13.500 7 11 11M13.500 1.500Q16.800 7 13.500 12.500", "#fff"))}
          </div>
          <div class="clock">${t("9:24 PM", 42)}${t("10/10/2022", 58)}</div>
          <div class="note">${ic(16, 16, ph("M.5 .5H15.500V12.500H11L8 15.500L5.500 12.500H.5Z", "#fff", "none", 1.200))}</div>
          <div class="edge"></div>
        </div>
      </div>`;
  }
}
